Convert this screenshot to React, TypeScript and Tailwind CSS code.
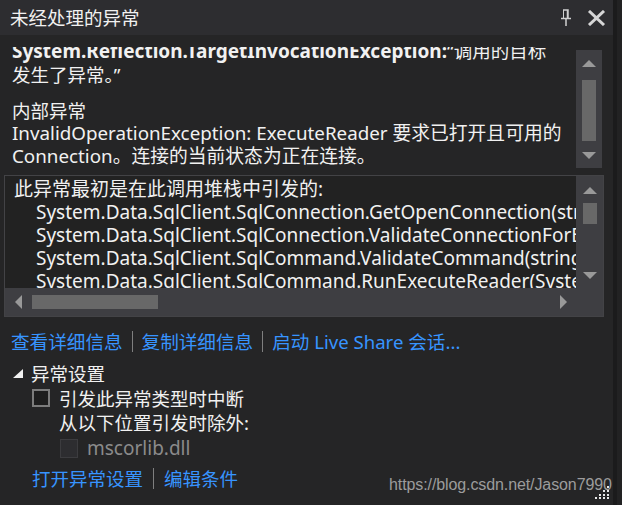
import React from 'react';

const FONT = { fontFamily: '"Noto Sans", "Noto Sans CJK SC", sans-serif' };

function Arrow({ dir }: { dir: 'up' | 'down' | 'left' | 'right' }) {
  if (dir === 'up')
    return (
      <svg width="14" height="7" viewBox="0 0 14 7">
        <polygon points="7,0 14,7 0,7" fill="#999999" />
      </svg>
    );
  if (dir === 'down')
    return (
      <svg width="14" height="7" viewBox="0 0 14 7">
        <polygon points="0,0 14,0 7,7" fill="#999999" />
      </svg>
    );
  if (dir === 'left')
    return (
      <svg width="7" height="14" viewBox="0 0 7 14">
        <polygon points="7,0 7,14 0,7" fill="#999999" />
      </svg>
    );
  return (
    <svg width="7" height="14" viewBox="0 0 7 14">
      <polygon points="0,0 7,7 0,14" fill="#999999" />
    </svg>
  );
}

function Sep() {
  return <span className="w-px h-[21px] bg-[#7f7f7f]" />;
}

export default function App() {
  const stack = [
    'System.Data.SqlClient.SqlConnection.GetOpenConnection(string)',
    'System.Data.SqlClient.SqlConnection.ValidateConnectionForExecute(string, System.Data.SqlClient.SqlCommand)',
    'System.Data.SqlClient.SqlCommand.ValidateCommand(string, bool)',
    'System.Data.SqlClient.SqlCommand.RunExecuteReader(System.Data.CommandBehavior)',
  ];

  return (
    <div className="relative flex w-[622px] h-[505px] overflow-hidden bg-[#1e1e1e] text-[19px] text-[#f1f1f1]" style={FONT}>
      <div className="flex flex-col w-[613px] bg-[#252526]">
        {/* title bar */}
        <div className="flex items-center h-[35px] bg-[#2d2d30] pl-[10px] pr-[7px]">
          <span className="leading-[23px] text-[18.5px]">未经处理的异常</span>
          <div className="ml-auto flex items-center gap-[15px]">
            <svg width="12" height="17" viewBox="0 0 12 17">
              <path d="M3 1 H8 V9 M7.5 1 V9" stroke="#d0d0d0" strokeWidth="1.5" fill="none" />
              <path d="M3.5 1 V9" stroke="#d0d0d0" strokeWidth="1" fill="none" />
              <path d="M1 9.5 H11" stroke="#d0d0d0" strokeWidth="1.5" />
              <path d="M6 10 V17" stroke="#d0d0d0" strokeWidth="1.5" />
            </svg>
            <svg width="19" height="16" viewBox="0 0 19 16">
              <path d="M2 1 L17 15 M17 1 L2 15" stroke="#d6d6d6" strokeWidth="3" />
            </svg>
          </div>
        </div>

        {/* message */}
        <div className="flex mt-[12px] h-[123px]">
          <div className="flex-1 overflow-hidden pl-[12px]">
            <div className="-mt-[8px] leading-[23px]">
              <div className="whitespace-nowrap">
                <span className="font-bold">System.Reflection.TargetInvocationException:</span>
                <span className="text-[18.5px]">“调用的目标</span>
              </div>
              <div className="text-[18.5px]">发生了异常。”</div>
              <div className="mt-[13px] text-[18.5px]">内部异常</div>
              <div className="whitespace-nowrap text-[18.8px]">InvalidOperationException: ExecuteReader 要求已打开且可用的</div>
              <div className="whitespace-nowrap text-[18.8px]">Connection。连接的当前状态为正在连接。</div>
            </div>
          </div>
          <div className="flex flex-col items-center w-[26px] mt-[3px] mr-[11px] h-[118px] bg-[#3e3e42]">
            <div className="mt-[10px]"><Arrow dir="up" /></div>
            <div className="mt-[13px] w-[14px] h-[61px] bg-[#686868]" />
            <div className="mt-[11px]"><Arrow dir="down" /></div>
          </div>
        </div>

        {/* stack trace */}
        <div className="ml-[4px] mt-[5px] w-[600px] h-[142px] border border-[#434346] bg-[#222222] grid grid-cols-[1fr_27px] grid-rows-[1fr_28px]">
          <div className="overflow-hidden pl-[9px] pt-[2px] leading-[23px]">
            <div className="whitespace-nowrap">此异常最初是在此调用堆栈中引发的:</div>
            {stack.map((s) => (
              <div key={s} className="whitespace-nowrap pl-[22px]">{s}</div>
            ))}
          </div>
          <div className="flex flex-col items-center bg-[#3e3e42]">
            <div className="mt-[11px]"><Arrow dir="up" /></div>
            <div className="mt-[9px] w-[14px] h-[21px] bg-[#686868]" />
            <div className="mt-[48px]"><Arrow dir="down" /></div>
          </div>
          <div className="flex items-center bg-[#3e3e42]">
            <div className="ml-[10px]"><Arrow dir="left" /></div>
            <div className="ml-[10px] w-[126px] h-[14px] bg-[#686868]" />
            <div className="ml-auto mr-[9px]"><Arrow dir="right" /></div>
          </div>
          <div className="bg-[#3e3e42]" />
        </div>

        {/* links */}
        <div className="flex items-center gap-[9px] h-[24px] mt-[12px] pl-[11px] text-[#3794ff] leading-[23px] text-[18.6px]">
          <span>查看详细信息</span>
          <Sep />
          <span>复制详细信息</span>
          <Sep />
          <span>启动 Live Share 会话...</span>
        </div>

        {/* exception settings */}
        <div className="flex items-center h-[24px] mt-[8px] pl-[13px] leading-[23px]">
          <svg width="10" height="9" viewBox="0 0 10 9">
            <polygon points="10,0 10,9 0,9" fill="#f1f1f1" />
          </svg>
          <span className="ml-[8px] text-[18.5px]">异常设置</span>
        </div>
        <div className="flex items-center h-[24px] mt-[1px] pl-[32px] leading-[23px]">
          <span className="w-[18px] h-[18px] border-2 border-[#7c7c7c] bg-[#1e1e1e]" />
          <span className="ml-[9px] text-[18.5px]">引发此异常类型时中断</span>
        </div>
        <div className="flex items-center h-[24px] pl-[59px] leading-[23px] text-[18.5px]">从以下位置引发时除外:</div>
        <div className="flex items-center h-[24px] mt-[2px] pl-[60px] leading-[23px]">
          <span className="w-[18px] h-[19px] border border-[#3c3c3f] bg-[#2d2d30]" />
          <span className="ml-[9px] text-[#8b8b8b]">mscorlib.dll</span>
        </div>
        <div className="flex items-center gap-[10px] h-[24px] mt-[6px] pl-[32px] text-[#3794ff] leading-[23px] text-[18.5px]">
          <span>打开异常设置</span>
          <Sep />
          <span>编辑条件</span>
        </div>
      </div>
      <div className="w-[9px] border-l-[4px] border-[#1b1b1c] bg-[#222223]" />

      {/* watermark */}
      <div
        className="absolute left-[389px] top-[474px] text-[16px] leading-[22px] text-[#9c9c9c] whitespace-nowrap tracking-[-0.1px]"
        style={{ fontFamily: '"Liberation Sans", Arial, sans-serif' }}
      >
        https://blog.csdn.net/Jason7990
      </div>
      {/* resize grip */}
      <svg className="absolute left-[594px] top-[485px]" width="17" height="14" viewBox="0 0 17 14">
        {[
          [13, 1], [9, 5], [13, 5], [5, 9], [9, 9], [13, 9], [1, 12], [5, 12], [9, 12], [13, 12],
        ].map(([x, y], i) => (
          <rect key={i} x={x} y={y} width="2" height="2" fill="#e8e8e8" />
        ))}
      </svg>
    </div>
  );
}
